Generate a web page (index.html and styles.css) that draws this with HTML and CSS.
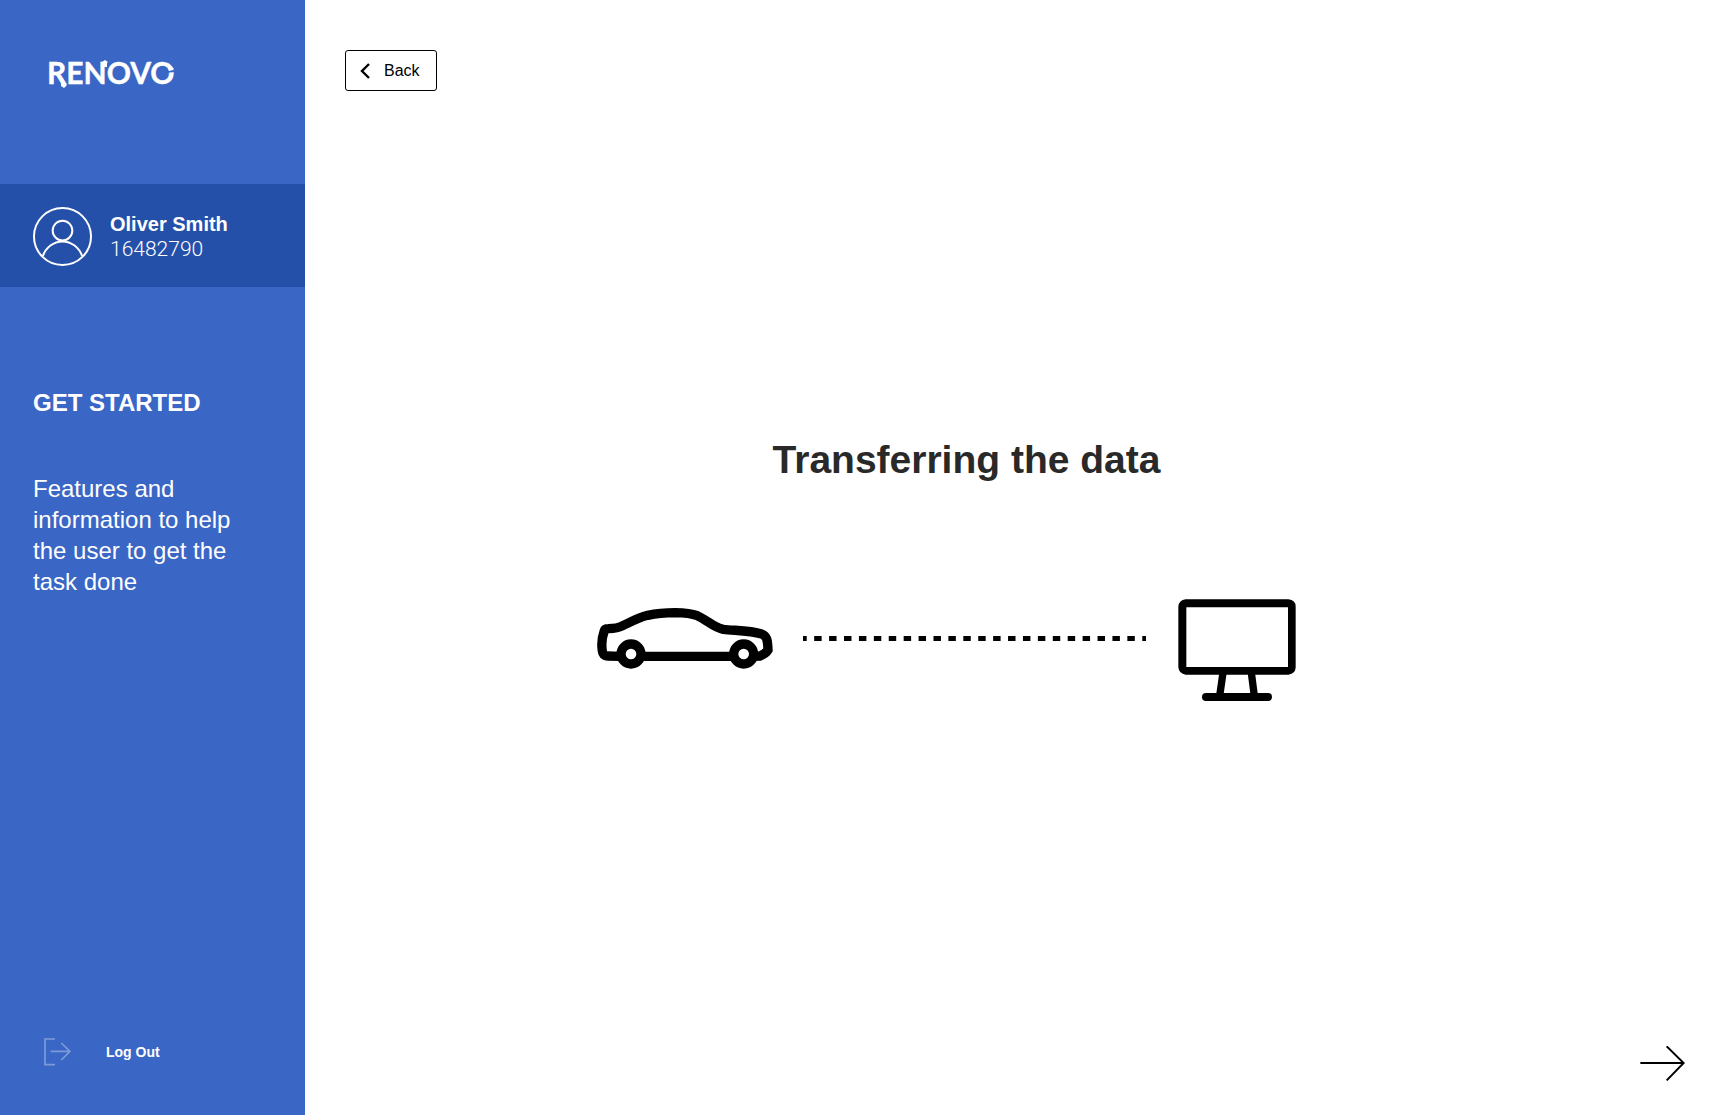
FILE: index.html
```html
<!DOCTYPE html>
<html lang="en">
<head>
<meta charset="utf-8">
<meta name="viewport" content="width=device-width, initial-scale=1">
<title>Renovo - Transferring the data</title>
<link rel="stylesheet" href="styles.css">
</head>
<body>
<div class="app">
  <aside class="sidebar">
    <svg class="logo" viewBox="0 0 136 36" role="img" aria-label="Renovo">
      <text class="logo-text" x="0" y="25">RENOVO</text>
      <path class="logo-mark" d="M14 24h5v1l1 1-3 3-3-2zM56 8V4l-1-1 3-2 3 2-1 1v4z"/>
      <path class="logo-gap" d="M118 12l10-1v2l-10 1z"/>
      <path class="logo-mark" d="M121 8l3-1 3 3-5 2z"/>
    </svg>
    <section class="profile">
      <svg class="avatar" viewBox="0 0 60 60" aria-hidden="true">
        <circle cx="30" cy="30" r="29"/>
        <circle cx="30" cy="24" r="10"/>
        <path d="M10 50C13 41 21 35 30 35s17 6 20 15"/>
      </svg>
      <div>
        <div class="profile-name">Oliver Smith</div>
        <div class="profile-id">16482790</div>
      </div>
    </section>
    <section class="intro">
      <h2 class="intro-title">GET STARTED</h2>
      <p class="intro-text">Features and information to help the user to get the task done</p>
    </section>
    <button class="logout" type="button">
      <svg class="logout-icon" viewBox="42 51 81 84" aria-hidden="true">
        <path d="M75 54H45v77h30M62 91h58M94 66l26 25-26 26"/>
      </svg>
      Log Out
    </button>
  </aside>
  <main class="main">
    <button class="back" type="button">
      <svg class="back-icon" viewBox="0 0 10 16" aria-hidden="true"><path d="M9 1L2 8l7 7"/></svg>
      Back
    </button>
    <section class="stage">
      <h1 class="title">Transferring the data</h1>
      <div class="transfer">
        <div class="route">
          <svg class="car" viewBox="51 51 528 183" aria-hidden="true">
            <path d="M120 196L82 195Q69 195 67 180Q62 150 73 119Q75 113 85 113Q113 112 126 105C150 94 175 80 203 73Q240 65 285 65Q330 66 352 74C382 87 398 108 430 115C466 119 510 118 545 129C561 135 563 148 564 177Q558 187 540 195L515 196M180 196H460"/>
            <circle cx="153" cy="189" r="30"/>
            <circle cx="491" cy="189" r="30"/>
          </svg>
          <svg class="dots" viewBox="0 0 343 5" aria-hidden="true"><path d="M0 2.5H343" pathLength="92"/></svg>
        </div>
        <svg class="monitor" viewBox="144 54 354 306" aria-hidden="true">
          <path class="screen" fill-rule="evenodd" d="M167 55H475Q497 57 497 77V259Q497 279 475 281H167Q147 279 145 259V77Q147 57 167 55ZM169 79V258H474V79Z"/>
          <path class="leg" d="M279 275L269 345M364 275L373 345"/>
          <path class="base" d="M228 348H414"/>
        </svg>
      </div>
    </section>
    <button class="next" type="button" aria-label="Next">
      <svg class="next-icon" viewBox="90 75 135 105" aria-hidden="true"><path d="M91 126H220M170 76L221 126 170 178"/></svg>
    </button>
  </main>
</div>
</body>
</html>
```

FILE: styles.css
```css
* {
  box-sizing: border-box;
}

body {
  margin: 0;
  font-family: "Liberation Sans", Arial, sans-serif;
  background: #fff;
}

button {
  border: 0;
  padding: 0;
  background: none;
  font-family: inherit;
  cursor: pointer;
}

svg {
  display: block;
  flex: none;
}

.app {
  display: flex;
  min-height: 100vh;
}

.sidebar {
  flex: none;
  display: flex;
  flex-direction: column;
  width: 305px;
  padding: 59px 0 49px;
  background: #3a66c5;
  color: #fff;
}

.logo {
  width: 136px;
  height: 36px;
  margin-left: 47px;
  overflow: visible;
}

.logo-text {
  font: 700 30px Lato, sans-serif;
  fill: #fff;
  stroke: #fff;
  stroke-width: 0.4;
}

.logo-mark {
  fill: #fff;
}

.logo-gap {
  fill: #3a66c5;
}

.profile {
  display: flex;
  align-items: center;
  gap: 18px;
  height: 103px;
  margin-top: 89px;
  padding: 2px 0 0 33px;
  background: #2550a9;
}

.avatar {
  width: 59px;
  height: 59px;
  fill: none;
  stroke: #fff;
  stroke-width: 2;
}

.profile-name {
  font-size: 20px;
  font-weight: 700;
  line-height: 25px;
}

.profile-id {
  font-family: Roboto, sans-serif;
  font-size: 21px;
  font-weight: 300;
  line-height: 25px;
}

.intro {
  padding: 100px 60px 0 33px;
}

.intro-title {
  margin: 0;
  font-size: 24px;
  line-height: 31px;
}

.intro-text {
  margin: 55px 0 0;
  font-size: 24px;
  line-height: 31px;
}

.logout {
  display: flex;
  align-items: center;
  gap: 35px;
  margin: auto 0 0 44px;
  color: #fff;
  font-size: 14px;
  font-weight: 700;
}

.logout-icon {
  width: 27px;
  height: 28px;
  fill: none;
  stroke: #fff;
  stroke-opacity: 0.35;
  stroke-width: 5;
}

.main {
  flex: 1;
  display: flex;
  flex-direction: column;
  padding: 50px 43px 34px 40px;
}

.back {
  align-self: flex-start;
  display: flex;
  align-items: center;
  gap: 14px;
  height: 41px;
  padding: 0 16px 0 14px;
  border: 1px solid #000;
  border-radius: 3px;
  color: #000;
  font-size: 16px;
}

.back-icon {
  width: 10px;
  height: 16px;
  fill: none;
  stroke: #000;
  stroke-width: 2.4;
}

.stage {
  flex: 1;
  display: flex;
  flex-direction: column;
  align-items: center;
  justify-content: center;
  gap: 116px;
  padding-right: 97px;
}

.title {
  margin: 0;
  color: #292929;
  font-size: 39px;
  line-height: 46px;
}

.transfer {
  display: flex;
  gap: 32px;
  margin-right: 40px;
}

.route {
  display: flex;
  align-items: center;
  gap: 30px;
  height: 80px;
}

.car {
  width: 176px;
  height: 61px;
  fill: none;
  stroke: #000;
  stroke-width: 28;
}

.car circle {
  fill: #fff;
}

.dots {
  width: 343px;
  height: 5px;
  fill: none;
  stroke: #000;
  stroke-width: 5;
  stroke-dasharray: 2 2;
  stroke-dashoffset: 1;
}

.monitor {
  width: 118px;
  height: 102px;
}

.leg,
.base {
  fill: none;
  stroke: #000;
}

.leg {
  stroke-width: 22;
}

.base {
  stroke-width: 24;
  stroke-linecap: round;
}

.next {
  align-self: flex-end;
}

.next-icon {
  width: 45px;
  height: 35px;
  fill: none;
  stroke: #000;
  stroke-width: 6;
}
```
